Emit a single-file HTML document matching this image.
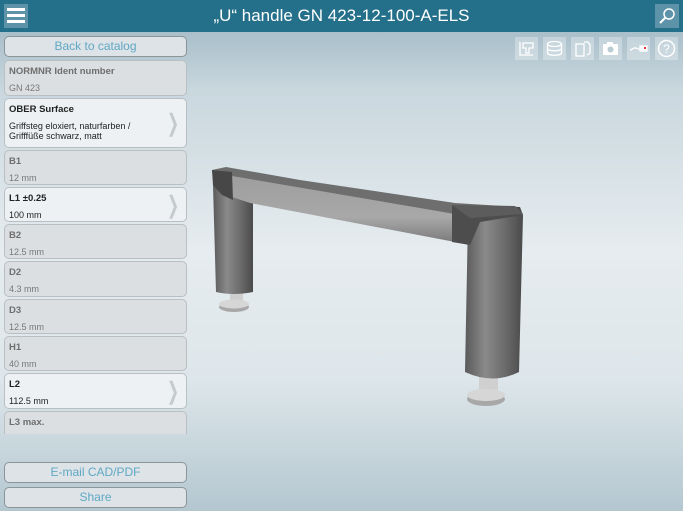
<!DOCTYPE html>
<html><head><meta charset="utf-8"><style>
*{margin:0;padding:0;box-sizing:border-box}
body{width:683px;height:511px;overflow:hidden;font-family:"Liberation Sans",sans-serif;background:linear-gradient(180deg,#a9bfca 32px,#c9d7de 90px,#e6ecef 250px,#dde6ea 380px,#b4c7d0 511px);position:relative}
.hdr{position:absolute;left:0;top:0;width:683px;height:32px;background:#24708b;color:#fff;text-align:center;font-size:17px;line-height:32px}
.menu{position:absolute;left:4px;top:4px;width:24px;height:24px;background:#5d93a8;padding:4px 3px}
.menu i{display:block;height:3px;background:#fff;margin-bottom:3px}
.zm{position:absolute;left:655px;top:4px;width:24px;height:24px;background:#5d93a8}
.btn{position:absolute;left:4px;width:183px;height:21px;border:1px solid #8a9599;border-radius:5px;background:#dde3e6;color:#5fa8c4;font-size:12px;text-align:center;line-height:19px}
.list{position:absolute;left:4px;top:60px;width:183px;height:374px;overflow:hidden}
.row{border:1px solid #b8c0c4;border-radius:5px;background:#dcdfe1;margin-bottom:2px;padding:5px 4px;font-size:9px;color:#777;position:relative}
.row b{display:block;font-size:9.5px;color:#6e6e6e;margin-bottom:6px}
.row.a{background:#edf1f3;color:#222}.row.a b{color:#222}
.row .ch{position:absolute;right:3px;top:50%;margin-top:-14px;font-size:24px;color:#c5cacc;transform:scaleX(.6)}
.ic{position:absolute;top:37px;width:23px;height:23px;background:rgba(255,255,255,.3)}
</style></head><body>
<div class="hdr">„U“ handle GN 423-12-100-A-ELS</div>
<div class="menu"><i></i><i></i><i></i></div>
<div class="zm"><svg width="24" height="24"><circle cx="14" cy="10" r="5" fill="none" stroke="#fff" stroke-width="1.5"/><line x1="10" y1="14" x2="5" y2="19" stroke="#fff" stroke-width="2"/></svg></div>
<div class="btn" style="top:36px">Back to catalog</div>
<div class="list">
<div class="row" style="height:36px"><b>NORMNR Ident number</b>GN 423</div>
<div class="row a" style="height:50px"><b>OBER Surface</b>Griffsteg eloxiert, naturfarben /<br>Grifffüße schwarz, matt<span class="ch">❯</span></div>
<div class="row" style="height:35px"><b>B1</b>12 mm</div>
<div class="row a" style="height:35px"><b>L1 ±0.25</b>100 mm<span class="ch">❯</span></div>
<div class="row" style="height:35px"><b>B2</b>12.5 mm</div>
<div class="row" style="height:36px"><b>D2</b>4.3 mm</div>
<div class="row" style="height:35px"><b>D3</b>12.5 mm</div>
<div class="row" style="height:35px"><b>H1</b>40 mm</div>
<div class="row a" style="height:36px"><b>L2</b>112.5 mm<span class="ch">❯</span></div>
<div class="row" style="height:36px"><b>L3 max.</b>5 mm</div>
</div>
<div class="btn" style="top:462px">E-mail CAD/PDF</div>
<div class="btn" style="top:487px">Share</div>
<div class="ic" style="left:515px"><svg width="23" height="23" fill="none" stroke="#fff" stroke-width="1.3"><path d="M5 5v13h13M8 6h10v5h-4v5h-3v-5H8z"/></svg></div>
<div class="ic" style="left:543px"><svg width="23" height="23" fill="none" stroke="#fff" stroke-width="1.3"><ellipse cx="11.5" cy="7" rx="7" ry="2.5"/><path d="M4.5 7v9c0 3 14 3 14 0V7M4.5 11.5c0 3 14 3 14 0"/></svg></div>
<div class="ic" style="left:571px"><svg width="23" height="23" fill="none" stroke="#fff" stroke-width="1.3"><rect x="5" y="7" width="8" height="12"/><path d="M13 5h4l2 3v8l-3 2"/></svg></div>
<div class="ic" style="left:599px"><svg width="23" height="23"><rect x="4" y="7" width="15" height="11" rx="1" fill="#fff"/><rect x="8" y="5" width="6" height="3" fill="#fff"/><circle cx="11.5" cy="12.5" r="3" fill="#b9cbd3"/></svg></div>
<div class="ic" style="left:627px"><svg width="23" height="23" fill="none" stroke="#fff" stroke-width="1.3"><path d="M3 13c3 0 3-3 6-2s3 2 6 0"/><rect x="13" y="9" width="7" height="5" fill="#fff"/><rect x="17" y="10" width="2" height="2" fill="#e33" stroke="none"/></svg></div>
<div class="ic" style="left:655px"><svg width="23" height="23"><circle cx="11.5" cy="11.5" r="8" fill="none" stroke="#fff" stroke-width="1.5"/><text x="11.5" y="16" font-size="12" fill="#fff" text-anchor="middle" font-family="Liberation Sans">?</text></svg></div>
<svg style="position:absolute;left:0;top:0" width="683" height="511">
<defs>
<linearGradient id="lg" x1="0" x2="1"><stop offset="0" stop-color="#5a5a5a"/><stop offset=".35" stop-color="#8a8a8a"/><stop offset=".7" stop-color="#6a6a6a"/><stop offset="1" stop-color="#4a4a4a"/></linearGradient>
<linearGradient id="fr" x1="0" y1="0" x2="0" y2="1"><stop offset="0" stop-color="#9e9e9e"/><stop offset=".6" stop-color="#a8a8a8"/><stop offset="1" stop-color="#777"/></linearGradient>
</defs>
<!-- left foot -->
<rect x="230" y="292" width="13" height="10" fill="#cfcfcf"/>
<ellipse cx="234" cy="307" rx="15" ry="5" fill="#a8a8a8"/><ellipse cx="234" cy="304" rx="15" ry="4.5" fill="#d6d6d6"/>
<!-- left leg -->
<path d="M213 185 L253 195 L253 292 Q233 296 216 292 Z" fill="url(#lg)"/>
<!-- right foot -->
<rect x="479" y="376" width="19" height="14" fill="#d0d0d0"/>
<ellipse cx="486" cy="399" rx="19" ry="7" fill="#a8a8a8"/><ellipse cx="486" cy="395" rx="19" ry="6" fill="#d6d6d6"/>
<!-- right leg -->
<path d="M468 218 L523 215 L519 372 Q493 385 465 372 Z" fill="url(#lg)"/>
<!-- bar top face -->
<polygon points="212,170 226,167 300,180 455,203 518,207 523,215 470,223 250,185 232,180 213,180" fill="#6e6e6e"/>
<!-- bar front face -->
<polygon points="232,176 455,214 470,223 470,245 455,242 250,203 232,197" fill="url(#fr)"/>
<!-- left cap -->
<polygon points="212,170 232,172 233,200 222,195 213,185" fill="#474747"/>
<!-- right cap -->
<polygon points="452,205 520,207 523,215 480,222 470,245 452,242" fill="#4d4d4d"/>
<polygon points="452,205 515,206 523,214 470,218" fill="#5c5c5c"/>
</svg>
</body></html>
